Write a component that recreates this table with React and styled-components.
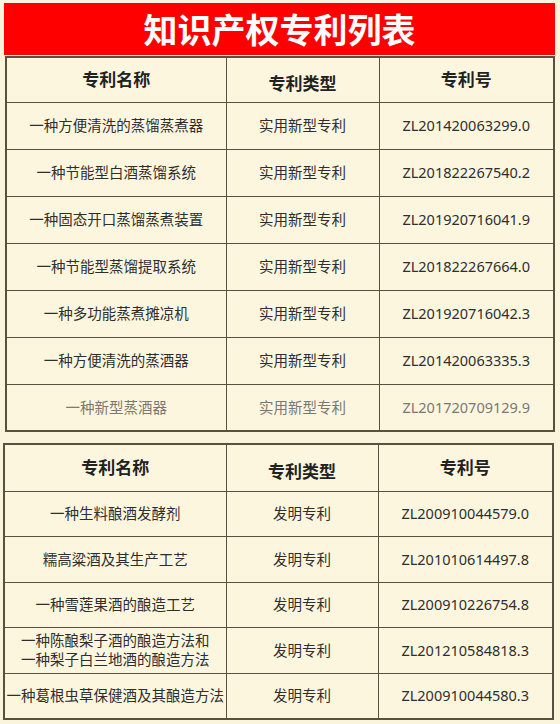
import React from 'react';
import styled, { createGlobalStyle } from 'styled-components';

const GlobalStyle = createGlobalStyle`
  html, body {
    margin: 0;
    padding: 0;
    background: #fbf4dc;
  }
  body {
    font-family: "Noto Sans", "Noto Sans CJK SC", sans-serif;
  }
`;

// Styled components
const Page = styled.div`
  width: 560px;
  height: 724px;
  padding-top: 3px;
  box-sizing: border-box;
  background: #fbf4dc;
  display: flex;
  flex-direction: column;
  overflow: hidden;
`;

const Banner = styled.h1`
  margin: 0 5px 0 4px;
  height: 52px;
  background: #ff0000;
  color: #fff;
  font-family: "Noto Sans CJK SC", sans-serif;
  font-weight: 700;
  font-size: 34px;
  line-height: 52px;
  text-align: center;
`;

const Table = styled.table`
  margin: ${(p) => p.$margin};
  width: ${(p) => p.$width}px;
  border-collapse: collapse;
  table-layout: fixed;
  background: #fdf6df;
  border: 2px solid #57523f;
`;

const HeadCell = styled.th`
  box-sizing: border-box;
  height: ${(p) => p.$h}px;
  padding: ${(p) => (p.$low ? '7px 0 0' : '0 0 2px')};
  border: 1.5px solid #57523f;
  font-family: "Noto Sans CJK SC", sans-serif;
  font-weight: 700;
  font-size: 17px;
  line-height: 20px;
  color: #222;
  text-align: center;
  vertical-align: middle;
`;

const Cell = styled.td`
  box-sizing: border-box;
  height: ${(p) => p.$h}px;
  padding: 0;
  border: 1.5px solid #57523f;
  font-size: 14.5px;
  line-height: ${(p) => (p.$multi ? '19px' : '17px')};
  color: ${(p) => (p.$faded ? '#7a7873' : '#2e2e2e')};
  text-align: center;
  vertical-align: middle;
  white-space: nowrap;
`;

const utility = [
  ['一种方便清洗的蒸馏蒸煮器', 'ZL201420063299.0'],
  ['一种节能型白酒蒸馏系统', 'ZL201822267540.2'],
  ['一种固态开口蒸馏蒸煮装置', 'ZL201920716041.9'],
  ['一种节能型蒸馏提取系统', 'ZL201822267664.0'],
  ['一种多功能蒸煮摊凉机', 'ZL201920716042.3'],
  ['一种方便清洗的蒸酒器', 'ZL201420063335.3'],
  ['一种新型蒸酒器', 'ZL201720709129.9', true],
];

const invention = [
  [['一种生料酿酒发酵剂'], 'ZL200910044579.0'],
  [['糯高粱酒及其生产工艺'], 'ZL201010614497.8'],
  [['一种雪莲果酒的酿造工艺'], 'ZL200910226754.8'],
  [['一种陈酿梨子酒的酿造方法和', '一种梨子白兰地酒的酿造方法'], 'ZL201210584818.3'],
  [['一种葛根虫草保健酒及其酿造方法'], 'ZL200910044580.3'],
];

const Head = ({ h }) => (
  <thead>
    <tr>
      <HeadCell $h={h}>专利名称</HeadCell>
      <HeadCell $h={h} $low>专利类型</HeadCell>
      <HeadCell $h={h}>专利号</HeadCell>
    </tr>
  </thead>
);

const App = () => (
  <Page>
    <GlobalStyle />
    <Banner>知识产权专利列表</Banner>

    <Table $margin="1px 0 0 5px" $width={550}>
      <colgroup>
        <col style={{ width: 220 }} />
        <col style={{ width: 153 }} />
        <col />
      </colgroup>
      <Head h={45} />
      <tbody>
        {utility.map(([name, no, faded]) => (
          <tr key={no}>
            <Cell $h={47} $faded={faded}>{name}</Cell>
            <Cell $h={47} $faded={faded}>实用新型专利</Cell>
            <Cell $h={47} $faded={faded}>{no}</Cell>
          </tr>
        ))}
      </tbody>
    </Table>

    <Table $margin="11px 0 0 3px" $width={551}>
      <colgroup>
        <col style={{ width: 222 }} />
        <col style={{ width: 152 }} />
        <col />
      </colgroup>
      <Head h={47} />
      <tbody>
        {invention.map(([lines, no]) => (
          <tr key={no}>
            <Cell $h={45.5} $multi={lines.length > 1}>
              {lines.map((l, i) => (
                <React.Fragment key={i}>
                  {i > 0 && <br />}
                  {l}
                </React.Fragment>
              ))}
            </Cell>
            <Cell $h={45.5}>发明专利</Cell>
            <Cell $h={45.5}>{no}</Cell>
          </tr>
        ))}
      </tbody>
    </Table>
  </Page>
);

export default App;
